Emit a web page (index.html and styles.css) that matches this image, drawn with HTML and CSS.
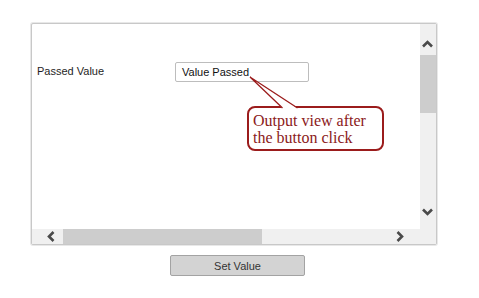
FILE: index.html
```html
<!DOCTYPE html>
<html>
<head>
<meta charset="utf-8">
<link rel="stylesheet" href="styles.css">
</head>
<body>
<div class="page">
  <div class="panel">
    <div class="viewport">
      <div class="row">
        <label class="label">Passed Value</label>
        <div class="input">Value Passed</div>
      </div>
      <div class="callout">Output view after<br>the button click</div>
      <svg class="tail" width="388" height="205" viewBox="0 0 388 205">
        <path d="M250 84 L218 53 L265 84 Z" fill="#fff" stroke="none"/>
        <path d="M250.5 84 L218 53 L265.5 84" fill="none" stroke="#9b1c1c" stroke-width="1.3"/>
      </svg>
    </div>
    <div class="vbar">
      <svg class="arrow up" width="15" height="16" viewBox="0 0 15 16"><polyline points="3,10.5 7.5,6 12,10.5" fill="none" stroke="#4a4a4a" stroke-width="2.6"/></svg>
      <div class="vtrack"><div class="vthumb"></div></div>
      <svg class="arrow down" width="15" height="16" viewBox="0 0 15 16"><polyline points="3,5.5 7.5,10 12,5.5" fill="none" stroke="#4a4a4a" stroke-width="2.6"/></svg>
    </div>
    <div class="hbar">
      <svg class="arrow left" width="16" height="15" viewBox="0 0 16 15"><polyline points="10.5,3 6,7.5 10.5,12" fill="none" stroke="#4a4a4a" stroke-width="2.6"/></svg>
      <div class="htrack"><div class="hthumb"></div></div>
      <svg class="arrow right" width="16" height="15" viewBox="0 0 16 15"><polyline points="5.5,3 10,7.5 5.5,12" fill="none" stroke="#4a4a4a" stroke-width="2.6"/></svg>
    </div>
    <div class="corner"></div>
  </div>
  <button class="btn">Set Value</button>
</div>
</body>
</html>
```
FILE: styles.css
```css
html, body { margin: 0; padding: 0; background: #fff; }
body { font-family: "Liberation Sans", Arial, sans-serif; font-size: 11px; color: #1e1e1e; }
.page { padding: 23px 0 0 31px; }
.panel {
  width: 404px; height: 220px;
  border: 1px solid #c8c8c8;
  box-shadow: 0 0 0 1px #e8e8e8;
  border-radius: 2px;
  display: grid;
  grid-template-columns: 388px 16px;
  grid-template-rows: 205px 15px;
  background: #fff;
}
.viewport { position: relative; overflow: hidden; }
.row { display: flex; align-items: flex-start; padding: 38px 0 0 5px; }
.label { width: 138px; padding-top: 3px; }
.input {
  width: 126px; height: 18px;
  border: 1px solid #bdbdbd; border-radius: 2px;
  padding-left: 6px; line-height: 18px; color: #111;
}
.callout {
  position: absolute; left: 215px; top: 82px;
  width: 129px; height: 37px;
  border: 2px solid #9b1c1c; border-radius: 8px;
  font-family: "Liberation Serif", "Times New Roman", serif;
  font-size: 16px; line-height: 17px; color: #8b2020;
  padding: 4px 0 0 4px; box-sizing: content-box;
}
.tail { position: absolute; left: 0; top: 0; }
.vbar { background: #f0f0f0; display: flex; flex-direction: column; }
.vtrack { flex: 1; }
.vthumb { height: 58px; background: #cdcdcd; }
.hbar { background: #f0f0f0; display: flex; }
.htrack { flex: 1; }
.hthumb { width: 199px; height: 15px; background: #cdcdcd; }
.arrow { display: block; flex: none; }
.arrow.up { margin: 12px 0 3px; }
.arrow.down { margin-bottom: 9px; }
.arrow.left { margin: 0 4px 0 11px; }
.arrow.right { margin-right: 12px; }
.corner { background: #f0f0f0; }
.btn {
  display: block; margin: 10px 0 0 139px;
  width: 135px; height: 21px;
  background: #d3d3d3; border: 1px solid #a3a3a3; border-radius: 2px;
  font-family: "Liberation Sans", Arial, sans-serif; font-size: 11px; color: #333;
  padding: 0;
}
```
